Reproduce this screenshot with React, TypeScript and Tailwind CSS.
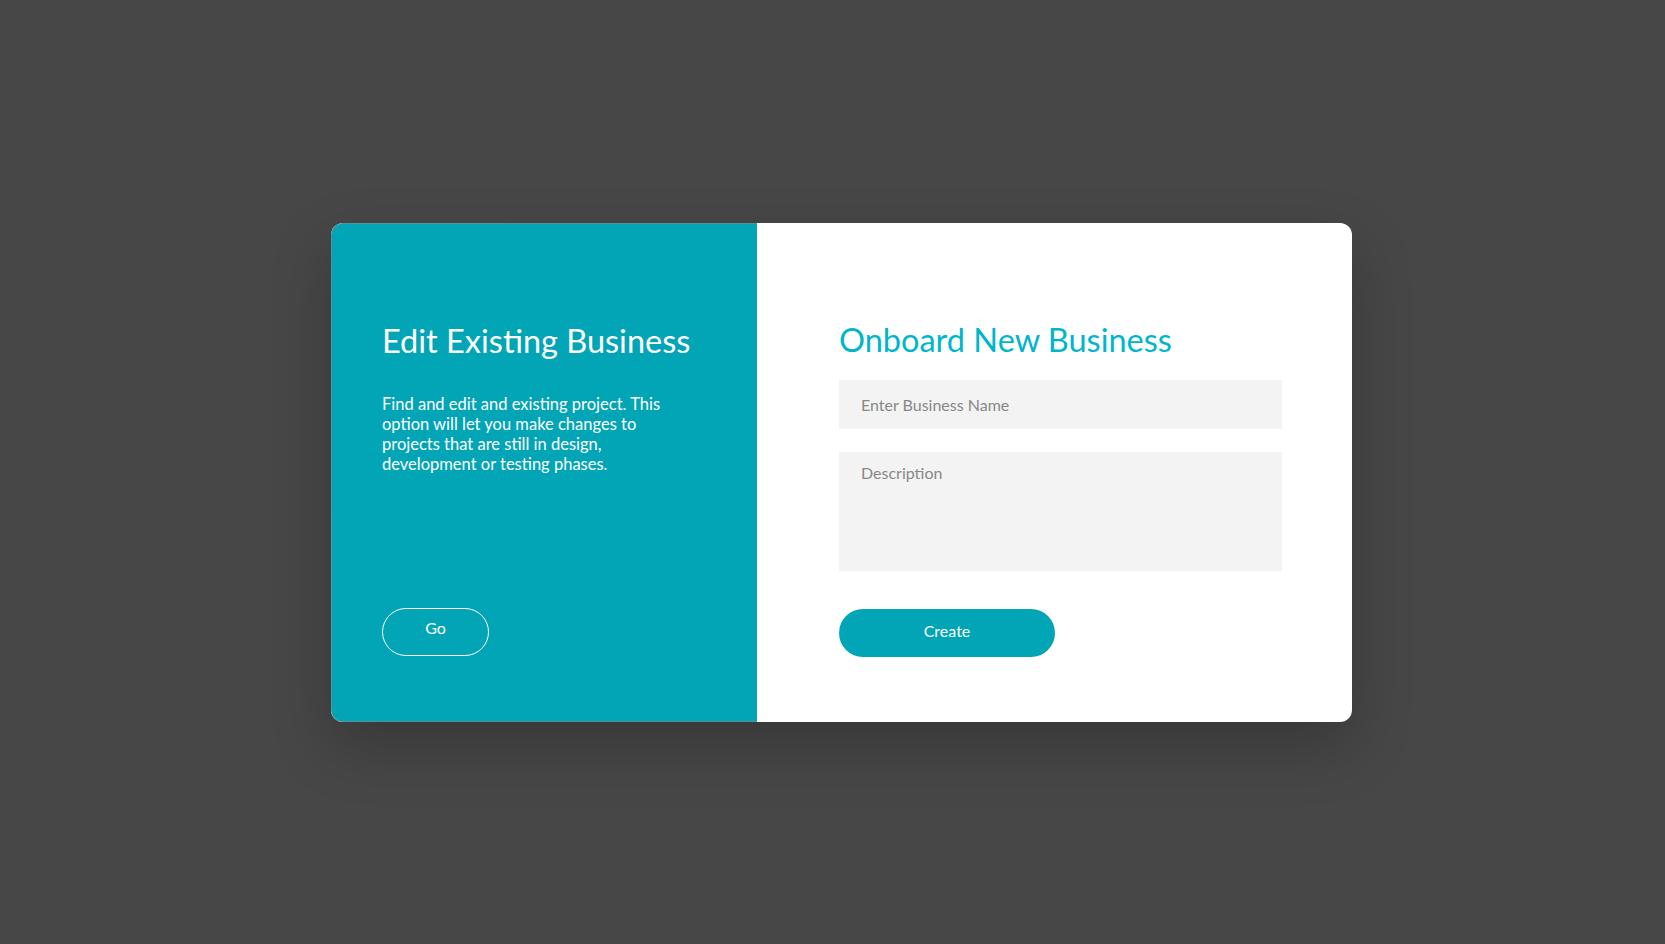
import React from "react";

const App: React.FC = () => {
  return (
    <div
      className="min-h-screen w-full bg-[#474747] flex items-center justify-center pl-[18px]"
      style={{ fontFamily: "Lato, 'Noto Sans', sans-serif" }}
    >
      <div className="flex w-[1021px] h-[499px] rounded-xl bg-white shadow-[0_24px_60px_rgba(0,0,0,0.22)]">
        <div className="w-[426px] shrink-0 bg-[#02a5b5] rounded-l-xl border border-r-0 border-[#8a8a8a]/60 flex flex-col pl-[50px] pt-[97px] pb-[65px]">
          <h2 className="text-[32.5px] leading-[40px] text-white font-normal">Edit Existing Business</h2>
          <p className="mt-[33px] w-[290px] text-[16.5px] leading-[20px] text-white">
            Find and edit and existing project. This option will let you make changes to projects that are still in
            design, development or testing phases.
          </p>
          <div className="mt-auto">
            <button className="w-[107px] h-[48px] rounded-full border border-white text-white text-[16px] pb-[7px]">
              Go
            </button>
          </div>
        </div>
        <div className="flex-1 flex flex-col pl-[82px] pr-[70px] pt-[97px] pb-[65px]">
          <h2 className="text-[32.5px] leading-[40px] text-[#00b5cc] font-normal">Onboard New Business</h2>
          <input
            type="text"
            placeholder="Enter Business Name"
            className="mt-[20px] h-[49px] w-full bg-[#f3f3f3] px-[22px] text-[16px] text-gray-700 placeholder:text-[#888888] outline-none"
          />
          <textarea
            placeholder="Description"
            className="mt-[23px] h-[119px] w-full resize-none bg-[#f3f3f3] px-[22px] pt-[9px] text-[16px] text-gray-700 placeholder:text-[#888888] outline-none"
          />
          <div className="mt-auto">
            <button className="w-[216px] h-[48px] rounded-full bg-[#02a5b5] text-white text-[16px] pb-[4px]">
              Create
            </button>
          </div>
        </div>
      </div>
    </div>
  );
};

export default App;
